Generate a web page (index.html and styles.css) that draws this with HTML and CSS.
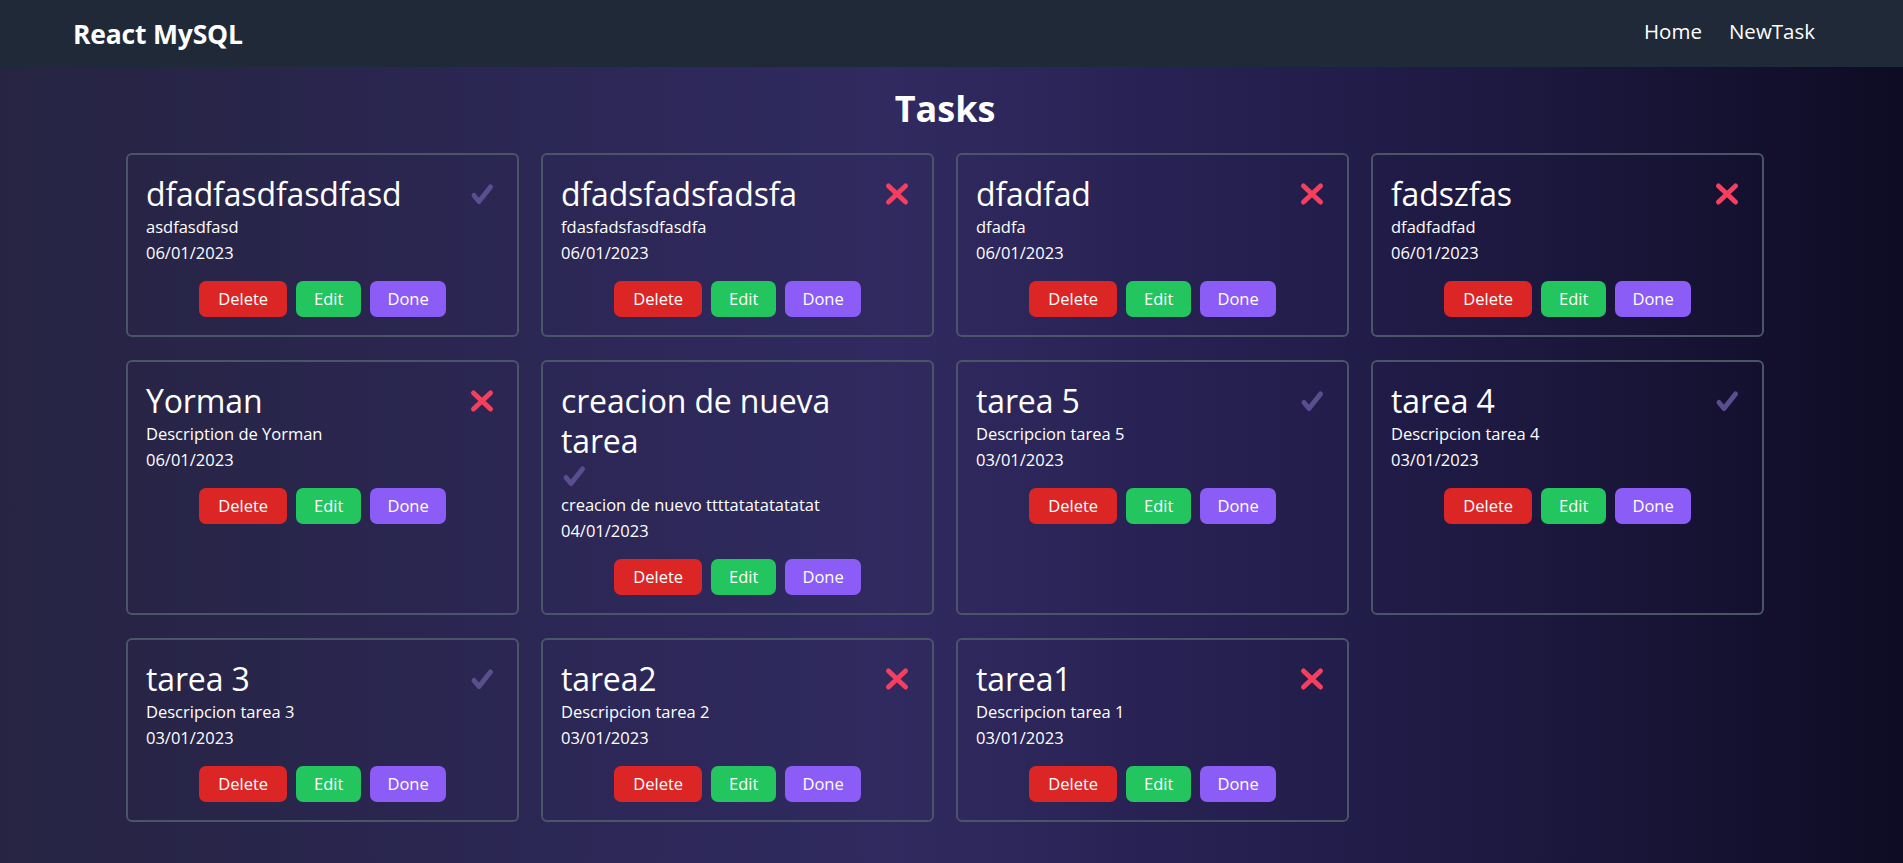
FILE: index.html
```html
<!DOCTYPE html>
<html lang="es">
<head>
<meta charset="utf-8">
<title>React MySQL</title>
<link rel="stylesheet" href="styles.css">
</head>
<body>
<header class="nav">
  <a class="brand" href="#">React MySQL</a>
  <ul class="links">
    <li><a href="#">Home</a></li>
    <li><a href="#">NewTask</a></li>
  </ul>
</header>
<main class="main">
  <h1 class="page-title">Tasks</h1>
  <div class="grid">
    <div class="card">
      <div class="card-head"><h2 class="card-title">dfadfasdfasdfasd</h2><svg class="icon icon-done" viewBox="0 0 30 31"><polyline points="5,16.5 10,22.5 21.5,8"/></svg></div>
      <p class="desc">asdfasdfasd</p><p class="date">06/01/2023</p>
      <div class="actions"><button class="btn btn-delete">Delete</button><button class="btn btn-edit">Edit</button><button class="btn btn-done">Done</button></div>
    </div>
    <div class="card">
      <div class="card-head"><h2 class="card-title">dfadsfadsfadsfa</h2><svg class="icon icon-todo" viewBox="0 0 30 31"><path d="M4.5 7 L21.5 23 M21.5 7 L4.5 23"/></svg></div>
      <p class="desc">fdasfadsfasdfasdfa</p><p class="date">06/01/2023</p>
      <div class="actions"><button class="btn btn-delete">Delete</button><button class="btn btn-edit">Edit</button><button class="btn btn-done">Done</button></div>
    </div>
    <div class="card">
      <div class="card-head"><h2 class="card-title">dfadfad</h2><svg class="icon icon-todo" viewBox="0 0 30 31"><path d="M4.5 7 L21.5 23 M21.5 7 L4.5 23"/></svg></div>
      <p class="desc">dfadfa</p><p class="date">06/01/2023</p>
      <div class="actions"><button class="btn btn-delete">Delete</button><button class="btn btn-edit">Edit</button><button class="btn btn-done">Done</button></div>
    </div>
    <div class="card">
      <div class="card-head"><h2 class="card-title">fadszfas</h2><svg class="icon icon-todo" viewBox="0 0 30 31"><path d="M4.5 7 L21.5 23 M21.5 7 L4.5 23"/></svg></div>
      <p class="desc">dfadfadfad</p><p class="date">06/01/2023</p>
      <div class="actions"><button class="btn btn-delete">Delete</button><button class="btn btn-edit">Edit</button><button class="btn btn-done">Done</button></div>
    </div>
    <div class="card">
      <div class="card-head"><h2 class="card-title">Yorman</h2><svg class="icon icon-todo" viewBox="0 0 30 31"><path d="M4.5 7 L21.5 23 M21.5 7 L4.5 23"/></svg></div>
      <p class="desc">Description de Yorman</p><p class="date">06/01/2023</p>
      <div class="actions"><button class="btn btn-delete">Delete</button><button class="btn btn-edit">Edit</button><button class="btn btn-done">Done</button></div>
    </div>
    <div class="card">
      <div class="card-head"><h2 class="card-title">creacion de nueva tarea</h2><svg class="icon icon-done" viewBox="0 0 30 31"><polyline points="5,16.5 10,22.5 21.5,8"/></svg></div>
      <p class="desc">creacion de nuevo ttttatatatatatat</p><p class="date">04/01/2023</p>
      <div class="actions"><button class="btn btn-delete">Delete</button><button class="btn btn-edit">Edit</button><button class="btn btn-done">Done</button></div>
    </div>
    <div class="card">
      <div class="card-head"><h2 class="card-title">tarea 5</h2><svg class="icon icon-done" viewBox="0 0 30 31"><polyline points="5,16.5 10,22.5 21.5,8"/></svg></div>
      <p class="desc">Descripcion tarea 5</p><p class="date">03/01/2023</p>
      <div class="actions"><button class="btn btn-delete">Delete</button><button class="btn btn-edit">Edit</button><button class="btn btn-done">Done</button></div>
    </div>
    <div class="card">
      <div class="card-head"><h2 class="card-title">tarea 4</h2><svg class="icon icon-done" viewBox="0 0 30 31"><polyline points="5,16.5 10,22.5 21.5,8"/></svg></div>
      <p class="desc">Descripcion tarea 4</p><p class="date">03/01/2023</p>
      <div class="actions"><button class="btn btn-delete">Delete</button><button class="btn btn-edit">Edit</button><button class="btn btn-done">Done</button></div>
    </div>
    <div class="card">
      <div class="card-head"><h2 class="card-title">tarea 3</h2><svg class="icon icon-done" viewBox="0 0 30 31"><polyline points="5,16.5 10,22.5 21.5,8"/></svg></div>
      <p class="desc">Descripcion tarea 3</p><p class="date">03/01/2023</p>
      <div class="actions"><button class="btn btn-delete">Delete</button><button class="btn btn-edit">Edit</button><button class="btn btn-done">Done</button></div>
    </div>
    <div class="card">
      <div class="card-head"><h2 class="card-title">tarea2</h2><svg class="icon icon-todo" viewBox="0 0 30 31"><path d="M4.5 7 L21.5 23 M21.5 7 L4.5 23"/></svg></div>
      <p class="desc">Descripcion tarea 2</p><p class="date">03/01/2023</p>
      <div class="actions"><button class="btn btn-delete">Delete</button><button class="btn btn-edit">Edit</button><button class="btn btn-done">Done</button></div>
    </div>
    <div class="card">
      <div class="card-head"><h2 class="card-title">tarea1</h2><svg class="icon icon-todo" viewBox="0 0 30 31"><path d="M4.5 7 L21.5 23 M21.5 7 L4.5 23"/></svg></div>
      <p class="desc">Descripcion tarea 1</p><p class="date">03/01/2023</p>
      <div class="actions"><button class="btn btn-delete">Delete</button><button class="btn btn-edit">Edit</button><button class="btn btn-done">Done</button></div>
    </div>
  </div>
</main>
</body>
</html>
```

FILE: styles.css
```css
* {
  box-sizing: border-box;
  margin: 0;
  padding: 0;
}

html {
  height: 100%;
  background: #1a1738;
}

body {
  min-height: 100%;
  font-family: "Open Sans", "Noto Sans", sans-serif;
  color: #ffffff;
  background: linear-gradient(to right, #262442 0%, #2a2650 22%, #302a60 47%, #251f4f 66%, #1a163a 84%, #0e0b24 100%);
}

.nav {
  height: 67px;
  background: #1f2938;
  display: flex;
  justify-content: space-between;
  align-items: center;
  padding: 0 88px 0 73px;
}

.brand {
  font-size: 26.5px;
  font-weight: 700;
  color: #ffffff;
  text-decoration: none;
  letter-spacing: -0.2px;
}

.links {
  display: flex;
  gap: 27px;
  list-style: none;
  padding-bottom: 5px;
}

.links a {
  font-size: 20.5px;
  color: #ffffff;
  text-decoration: none;
}

.main {
  padding: 20px 139px 41px 126px;
}

.page-title {
  text-align: center;
  font-size: 36px;
  line-height: 44px;
  font-weight: 700;
  margin-bottom: 22px;
}

.grid {
  display: grid;
  grid-template-columns: repeat(4, 1fr);
  column-gap: 22px;
  row-gap: 23px;
}

.card {
  border: 2px solid #4a5567;
  border-radius: 6px;
  padding: 19px 18px 18px;
}

.card-head {
  display: flex;
  flex-wrap: wrap;
  justify-content: space-between;
  align-items: center;
}

.card-title {
  font-size: 32px;
  line-height: 40px;
  font-weight: 400;
  letter-spacing: -0.15px;
}

.icon {
  display: block;
  flex: none;
  width: 30px;
  height: 31px;
  fill: none;
  stroke-width: 5;
  stroke-linecap: round;
  stroke-linejoin: round;
}

.icon-done {
  stroke: #5b4e8e;
}

.icon-todo {
  stroke: #f43f5e;
}

.desc,
.date {
  font-size: 16.5px;
  line-height: 26px;
}

.actions {
  display: flex;
  justify-content: center;
  gap: 9px;
  margin-top: 15px;
}

.btn {
  border: 0;
  color: #ffffff;
  font-family: inherit;
  font-size: 16.5px;
  line-height: 26px;
  padding: 5px 18px;
  border-radius: 7px;
  cursor: pointer;
}

.btn-delete {
  background: #dc2626;
  padding: 5px 19px;
}

.btn-edit {
  background: #22c55e;
}

.btn-done {
  background: #8b5cf6;
  padding: 5px 17px;
}
```
